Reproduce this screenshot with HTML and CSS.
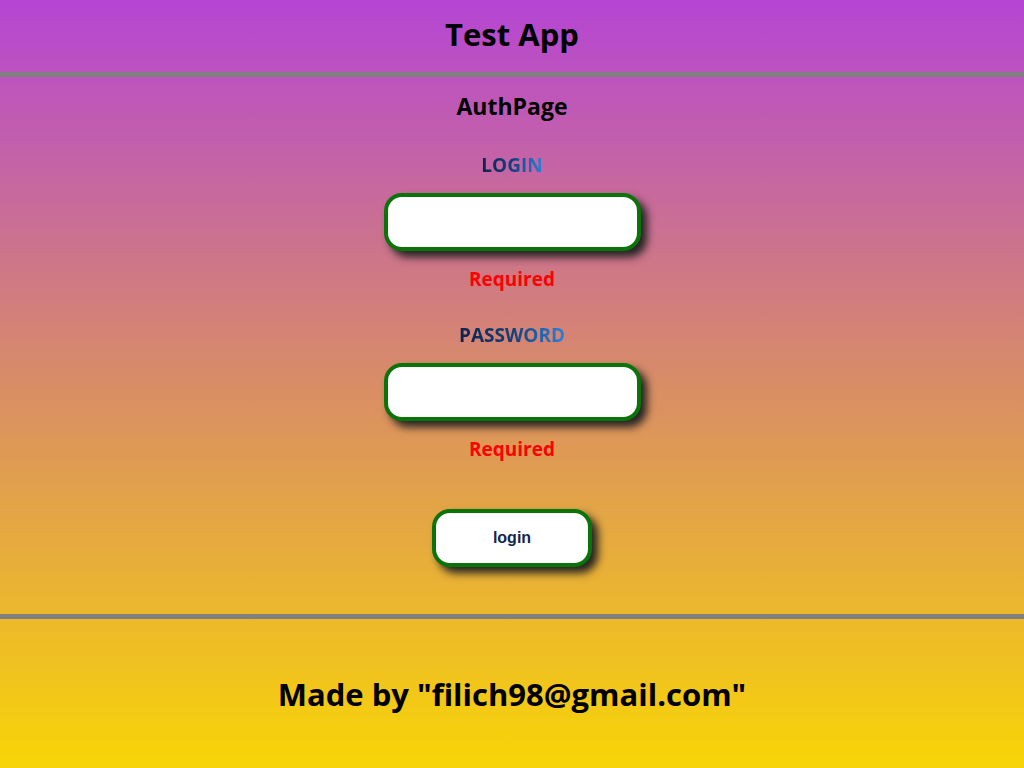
FILE: index.html
```html
<!DOCTYPE html>
<html>
<head>
<meta charset="utf-8">
<title>Test App</title>
<link rel="stylesheet" href="styles.css">
</head>
<body>
<div class="app">
  <header class="header"><h1 class="title">Test App</h1></header>
  <main class="main">
    <h2 class="page-title">AuthPage</h2>
    <form class="form">
      <div class="field">
        <label class="label">LOGIN</label>
        <input class="input" type="text">
        <div class="error">Required</div>
      </div>
      <div class="field field-second">
        <label class="label">PASSWORD</label>
        <input class="input" type="password">
        <div class="error">Required</div>
      </div>
      <button class="btn" type="button">login</button>
    </form>
  </main>
  <footer class="footer"><p class="made">Made by "filich98@gmail.com"</p></footer>
</div>
</body>
</html>
```
FILE: styles.css
```css
* { box-sizing: border-box; }
html, body { margin: 0; padding: 0; }
body {
  font-family: "Open Sans", "Noto Sans", sans-serif;
  color: #000;
}
.app {
  height: 768px;
  display: flex;
  flex-direction: column;
  background: linear-gradient(180deg, #b545d4 0%, #d98d66 50%, #f8d506 100%);
}
.header {
  height: 77px;
  border-bottom: 5px solid #808080;
  display: flex;
  align-items: center;
  justify-content: center;
  padding-bottom: 4px;
}
.title {
  margin: 0;
  font-size: 31px;
  font-weight: 700;
  line-height: 40px;
}
.main {
  height: 542px;
  border-bottom: 5px solid #808080;
  display: flex;
  flex-direction: column;
  align-items: center;
  padding-top: 15px;
}
.page-title {
  margin: 0;
  font-size: 23px;
  font-weight: 700;
  line-height: 28px;
}
.form {
  display: flex;
  flex-direction: column;
  align-items: center;
  margin-top: 31px;
}
.field {
  display: flex;
  flex-direction: column;
  align-items: center;
}
.field-second { margin-top: 28px; }
.label {
  font-size: 19px;
  font-weight: 700;
  line-height: 28px;
  background: linear-gradient(90deg, #0c2350 0%, #123f7c 50%, #2b82d8 100%);
  -webkit-background-clip: text;
  background-clip: text;
  color: transparent;
}
.input {
  margin-top: 14px;
  width: 257px;
  height: 58px;
  border: 4px solid #0a740a;
  border-radius: 18px;
  background: #fff;
  box-shadow: 6px 6px 8px #222;
  outline: none;
}
.error {
  margin-top: 14px;
  font-size: 19px;
  font-weight: 700;
  line-height: 28px;
  color: #ff0000;
}
.btn {
  margin-top: 46px;
  width: 160px;
  height: 58px;
  border: 4px solid #0a740a;
  border-radius: 18px;
  background: #fff;
  box-shadow: 6px 6px 8px #222;
  font-family: "Liberation Sans", Arial, sans-serif;
  font-weight: 700;
  font-size: 16px;
  color: #12264f;
  cursor: pointer;
}
.footer {
  flex: 1;
  display: flex;
  align-items: center;
  justify-content: center;
}
.made {
  margin: 0;
  font-size: 31px;
  font-weight: 700;
  line-height: 40px;
}
```
